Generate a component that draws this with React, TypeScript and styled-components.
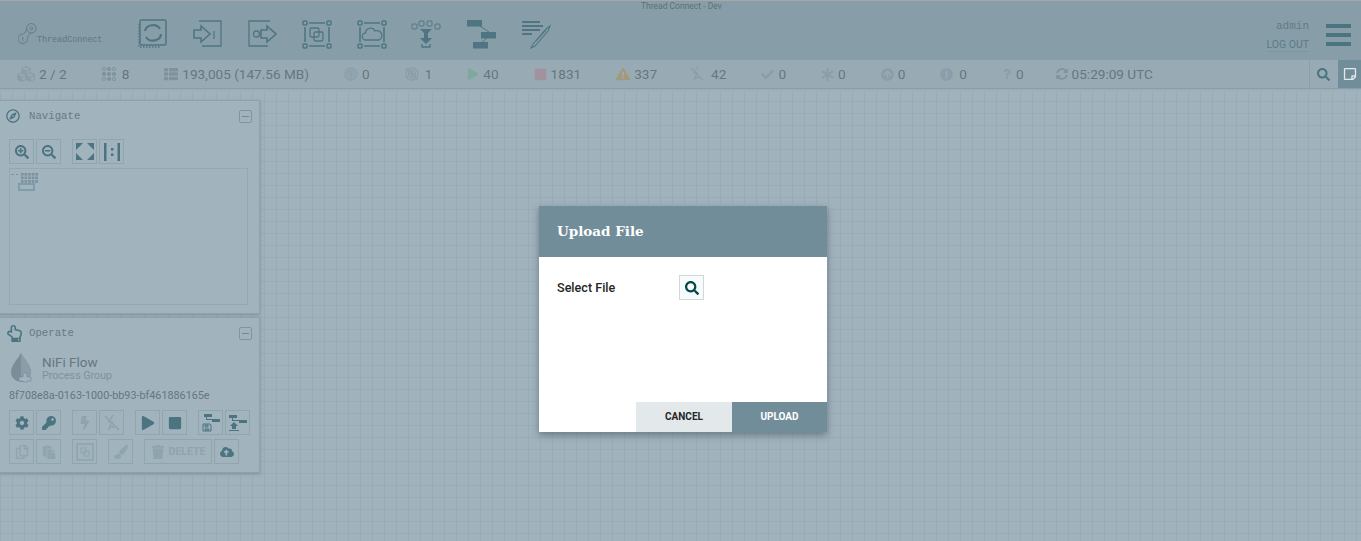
import React from "react";
import styled, { createGlobalStyle } from "styled-components";
import {
  FaArrowCircleUp, FaAsterisk, FaBolt, FaCheck, FaCloudUploadAlt, FaCog, FaCubes,
  FaExclamationCircle, FaExclamationTriangle, FaKey, FaPaintBrush, FaPaste, FaPlay, FaQuestion,
  FaRegCompass, FaRegCopy, FaRegHandPointUp, FaRegStickyNote, FaSearch, FaSearchMinus, FaSearchPlus,
  FaStop, FaSyncAlt, FaThList, FaTrash,
} from "react-icons/fa";

const Global = createGlobalStyle`
  html, body { margin: 0; padding: 0; height: 100%; overflow: hidden; }
  body { font-family: Roboto, "Liberation Sans", sans-serif; background: #a0b2bc; }
  #root { height: 100%; }
`;

const Page = styled.div`
  position: relative;
  display: flex;
  flex-direction: column;
  width: 1361px;
  height: 541px;
  overflow: hidden;
`;

const Header = styled.header`
  position: relative;
  display: flex;
  align-items: center;
  height: 59px;
  flex-shrink: 0;
  background: #879ea9;
  border-top: 1px solid #a9a5a8;
  padding: 0 10px 0 18px;
`;

const AppTitle = styled.div`
  position: absolute;
  top: 0;
  left: 641px;
  font-size: 8.5px;
  line-height: 10px;
  color: #5f6f78;
`;

const Logo = styled.div`
  display: flex;
  align-items: flex-end;
  width: 120px;
  height: 24px;
  margin-top: 6px;
  flex-shrink: 0;
`;

const LogoText = styled.span`
  font-family: "Liberation Mono", monospace;
  font-size: 8.4px;
  line-height: 9px;
  color: #607680;
  margin-bottom: 1px;
`;

const Tools = styled.div`
  display: flex;
  gap: 24.7px;
  margin-top: 6px;
`;

const ToolIcon = styled.svg`
  display: block;
  width: 30px;
  height: 30px;
  fill: none;
  stroke: #4f7582;
  stroke-width: 1.3;
`;

const User = styled.div`
  margin-left: auto;
  display: flex;
  flex-direction: column;
  align-items: flex-end;
  margin-top: 10px;
`;

const UserName = styled.div`
  font-family: "Liberation Mono", monospace;
  font-size: 11px;
  line-height: 14px;
  color: #667a84;
`;

const LogOut = styled.div`
  margin-top: 5px;
  font-size: 10.5px;
  line-height: 13px;
  color: #5b7a86;
  border-bottom: 1px solid #7d96a1;
`;

const Burger = styled.div`
  display: flex;
  flex-direction: column;
  gap: 5px;
  margin-left: 17px;
  margin-top: 9px;
`;

const BurgerBar = styled.div`
  width: 25px;
  height: 4px;
  background: #4b7480;
`;

const StatusBar = styled.div`
  display: flex;
  align-items: center;
  height: 28px;
  flex-shrink: 0;
  background: #98abb4;
  border-bottom: 1px solid #8a9fa9;
  padding-left: 17px;
`;

const Stat = styled.div<{ $gap?: number; $end?: number }>`
  display: flex;
  align-items: center;
  gap: ${(p) => p.$gap ?? 4}px;
  margin-right: ${(p) => p.$end ?? 35}px;
  font-size: 13.6px;
  color: #67767f;
  white-space: nowrap;
`;

const StatIcon = styled.span<{ $color?: string; $size?: number }>`
  display: flex;
  color: ${(p) => p.$color ?? "#8a9eaa"};
  font-size: ${(p) => p.$size ?? 13}px;
`;

const StatusTools = styled.div`
  margin-left: auto;
  display: flex;
  height: 100%;
`;

const SearchTab = styled.div`
  display: flex;
  align-items: center;
  justify-content: center;
  width: 27px;
  border-left: 1px solid #8a9fa9;
  color: #4b7480;
  font-size: 13px;
  margin-right: 1px;
`;

const NoteTab = styled.div`
  display: flex;
  align-items: center;
  justify-content: center;
  width: 23px;
  background: #728d9a;
  color: #e3eaed;
  font-size: 14px;
`;

const Canvas = styled.main`
  flex: 1;
  display: flex;
  flex-direction: column;
  gap: 3px;
  padding-top: 11px;
  background-color: #a0b2bc;
  background-image:
    linear-gradient(to right, #99acb6 1px, transparent 1px),
    linear-gradient(to bottom, #99acb6 1px, transparent 1px);
  background-size: 12px 12px;
`;

const Panel = styled.section`
  width: 260px;
  box-sizing: border-box;
  background: #a1b3bd;
  border: 1px solid #8ea2ac;
  border-left: none;
  box-shadow: 0 1px 3px rgba(70, 90, 100, 0.35);
  padding: 0 0 4px 9px;
`;

const PanelHead = styled.div<{ $bottom?: number }>`
  box-sizing: border-box;
  display: flex;
  align-items: center;
  height: 28px;
  margin: 0 0 ${(p) => p.$bottom ?? 0}px -3px;
  padding: 2px 7px 0 0;
`;

const PanelIcon = styled.span<{ $size?: number }>`
  display: flex;
  align-items: center;
  color: #4b7480;
  font-size: ${(p) => p.$size ?? 14}px;
  width: 23px;
`;

const PanelTitle = styled.span`
  font-family: "Liberation Mono", monospace;
  font-size: 10.7px;
  color: #667a84;
`;

const Collapse = styled.div`
  margin-left: auto;
  width: 11px;
  height: 11px;
  border: 1px solid #7f96a1;
  border-radius: 2px;
  display: flex;
  align-items: center;
  justify-content: center;
  &::before {
    content: "";
    width: 7px;
    height: 1px;
    background: #6f8895;
  }
`;

const ButtonRow = styled.div`
  display: flex;
  gap: 2px;
  margin-bottom: 4px;
`;

const Spacer = styled.div`
  width: 7px;
`;

const IconButton = styled.div<{ $off?: boolean; $wide?: boolean }>`
  box-sizing: border-box;
  display: flex;
  align-items: center;
  justify-content: center;
  gap: 4px;
  width: ${(p) => (p.$wide ? "68px" : "25px")};
  height: 25px;
  border: 1px solid #91a5af;
  color: ${(p) => (p.$off ? "#8ea4ae" : "#4b7480")};
  font-size: 14px;
`;

const DeleteLabel = styled.span`
  font-size: 10.5px;
  font-weight: 700;
  color: #8ea4ae;
`;

const Minimap = styled.div`
  position: relative;
  width: 239px;
  height: 137px;
  box-sizing: border-box;
  border: 1px solid #94a8b2;
  margin-bottom: 4px;
`;

const MiniGrid = styled.div`
  position: absolute;
  top: 3px;
  left: 10px;
  width: 18px;
  height: 11px;
  background-color: #7c929e;
  background-image:
    linear-gradient(to right, #a1b3bd 1px, transparent 1px),
    linear-gradient(to bottom, #a1b3bd 1px, transparent 1px);
  background-size: 3.6px 3.6px;
  &::before {
    content: "";
    position: absolute;
    left: -9px;
    top: 2px;
    width: 7px;
    height: 1px;
    background: repeating-linear-gradient(to right, #7c929e 0 3px, transparent 3px 5px);
  }
`;

const MiniView = styled.div`
  position: absolute;
  top: 14px;
  left: 8px;
  width: 13px;
  height: 4px;
  border: 2px solid #7e9dab;
`;

const GroupInfo = styled.div`
  display: flex;
  align-items: center;
  margin: 7px 0 6px 1px;
`;

const DropSlot = styled.div`
  display: flex;
  width: 32px;
`;

const GroupName = styled.div`
  font-size: 13.5px;
  line-height: 16px;
  color: #67767f;
`;

const GroupType = styled.div`
  font-size: 10.7px;
  line-height: 12px;
  color: #7f929c;
`;

const GroupId = styled.div`
  font-size: 10.8px;
  line-height: 14px;
  color: #67767f;
  margin-bottom: 7px;
`;

const Modal = styled.div`
  position: absolute;
  top: 206px;
  left: 539px;
  width: 288px;
  height: 226px;
  display: flex;
  flex-direction: column;
  background: #fff;
  box-shadow: 0 3px 7px rgba(40, 55, 65, 0.45);
`;

const ModalHead = styled.div`
  box-sizing: border-box;
  display: flex;
  align-items: center;
  height: 51px;
  padding: 0 0 2px 18px;
  background: #728d9a;
  color: #fff;
  font-family: "DejaVu Serif", serif;
  font-weight: 700;
  font-size: 13.5px;
`;

const ModalBody = styled.div`
  flex: 1;
  display: flex;
  align-items: flex-start;
  padding: 18px 0 0 18px;
`;

const FieldLabel = styled.label`
  width: 122px;
  line-height: 26px;
  font-size: 12.6px;
  font-weight: 500;
  color: #262626;
`;

const BrowseButton = styled.div`
  box-sizing: border-box;
  display: flex;
  align-items: center;
  justify-content: center;
  width: 25px;
  height: 25px;
  background: #f8fbfb;
  border: 1px solid #ccdadb;
  color: #004849;
  font-size: 14px;
`;

const ModalFoot = styled.div`
  display: flex;
  justify-content: flex-end;
`;

const FootButton = styled.div<{ $primary?: boolean }>`
  box-sizing: border-box;
  display: flex;
  align-items: center;
  justify-content: center;
  width: ${(p) => (p.$primary ? "95px" : "96px")};
  height: 30px;
  padding-bottom: 1px;
  font-size: 10px;
  font-weight: 700;
  background: ${(p) => (p.$primary ? "#728d9a" : "#e3e8eb")};
  color: ${(p) => (p.$primary ? "#fff" : "#262626")};
`;

const solid = { fill: "#4f7582", stroke: "none" };

const tools = [
  // processor
  <><rect x="2" y="1" width="26" height="25" rx="1.5" strokeWidth="1.5" /><path d="M1 5v23h22" strokeDasharray="1.5 1.5" /><path d="M7 12a8 7 0 0 1 15-2M23 15a8 7 0 0 1-15 3" strokeWidth="2.2" /></>,
  // input port
  <><path d="M6 2h22v25H9" /><path d="M1 11h7V7l9 8-9 8v-4H1z" strokeWidth="1.6" /><path d="M21 12v8" /></>,
  // output port
  <><path d="M23 2H2v25h19" /><circle cx="9.5" cy="15" r="3" /><path d="M14 11h6V7l9 8-9 8v-4h-6z" strokeWidth="1.6" /></>,
  // process group
  <><rect x="1" y="2" width="4" height="4" rx="1" strokeWidth="1.5" /><rect x="25" y="2" width="4" height="4" rx="1" strokeWidth="1.5" /><rect x="1" y="25" width="4" height="4" rx="1" strokeWidth="1.5" /><rect x="25" y="25" width="4" height="4" rx="1" strokeWidth="1.5" /><path d="M7 4h16M7 27h16M3 8v15M27 8v15" strokeWidth="1.6" /><rect x="8" y="9" width="9" height="9" rx="1.5" /><rect x="12" y="13" width="9" height="9" rx="1.5" /></>,
  // remote process group
  <><rect x="1" y="2" width="4" height="4" rx="1" strokeWidth="1.5" /><rect x="25" y="2" width="4" height="4" rx="1" strokeWidth="1.5" /><rect x="1" y="25" width="4" height="4" rx="1" strokeWidth="1.5" /><rect x="25" y="25" width="4" height="4" rx="1" strokeWidth="1.5" /><path d="M7 4h16M7 27h16M3 8v15M27 8v15" strokeWidth="1.6" /><path d="M9 21a3.5 3.5 0 0 1-.5-7 5 5 0 0 1 9.5-2 4.5 4.5 0 0 1 4 9z" /></>,
  // funnel
  <><rect x="1" y="5" width="5" height="5" rx="1" strokeWidth="1" /><rect x="8" y="2" width="5" height="5" rx="1" strokeWidth="1" /><rect x="16" y="2" width="5" height="5" rx="1" strokeWidth="1" /><rect x="24" y="5" width="5" height="5" rx="1" strokeWidth="1" /><path {...solid} d="M9 10h12l-4 4v5h4l-6 6-6-6h4v-5z" /><path d="M11 25v3h8v-3" /></>,
  // template
  <><rect {...solid} x="1" y="1" width="15" height="6.5" /><rect {...solid} x="15" y="13" width="15" height="6.5" /><rect {...solid} x="7" y="23" width="15" height="6.5" /><path d="M14 7l9 6M21 19l-6 5" strokeWidth="1" /></>,
  // label
  <><path d="M1 3h18M1 7h21M1 11h18M1 15h10" strokeWidth="1.9" /><path d="M12 25l13-15 4-3-2 5-13 15-4 2zM15 22l10-11" strokeWidth="1.1" /></>,
];

const Bullseye = ({ off }: { off?: boolean }) => (
  <svg width="14" height="14" viewBox="0 0 14 14" fill="none" stroke="#8a9eaa" strokeWidth="1.3">
    <circle cx="7" cy="7" r="6" />
    <circle cx="7" cy="7" r="3.5" />
    <circle cx="7" cy="7" r="1.2" fill="#8a9eaa" />
    {off && <path d="M1 1l12 12" strokeWidth="1.5" />}
  </svg>
);

const Threads = () => (
  <svg width="14" height="14" viewBox="0 0 14 14" fill="none" stroke="#7f939f">
    {[2, 7, 12].map((y) => [2, 7, 12].map((x) => <circle key={`${x}-${y}`} cx={x} cy={y} r="1.6" fill={y === 7 || x === 7 ? "#7f939f" : "none"} />))}
  </svg>
);

const BoltOff = ({ size = 14, color = "#8a9eaa" }: { size?: number; color?: string }) => (
  <svg width={size} height={size} viewBox="0 0 14 14" fill="none" stroke={color} strokeWidth="1.3">
    <path d="M8 0L4 6h3L5 10l4 1M1 1l12 12" />
    <path d="M4 13l2-3" />
  </svg>
);

const Revert = () => (
  <svg width="18" height="18" viewBox="0 0 18 18" fill="#4b7480">
    <path d="M0 1h8v3H0zM10 6h8v3h-8zM4 4v2h6v1H3V4z" />
    <path d="M5 8l4 4H7v3H3v-3H1zM0 16h10v1H0z" />
  </svg>
);

const SaveTemplate = () => (
  <svg width="18" height="18" viewBox="0 0 18 18" fill="#4b7480">
    <path d="M2 0h8v3H2zM10 5h8v3h-8zM5 3v2h5v1H4V3z" />
    <path d="M1 10h7l1 1v6H1zM3 15h4v1H3zM3 11h3v2H3z" fill="none" stroke="#4b7480" />
  </svg>
);

const GroupBox = () => (
  <svg width="18" height="18" viewBox="0 0 18 18" fill="none" stroke="#8ea4ae">
    <rect x="1" y="1" width="16" height="16" strokeWidth="1.5" />
    <rect x="5" y="5" width="5" height="5" />
    <rect x="8" y="8" width="5" height="5" />
  </svg>
);

const Fit = () => (
  <svg width="18" height="17" viewBox="0 0 18 17" fill="#4b7480">
    <path d="M0 0h7L0 7zM18 0h-7l7 7zM0 17h7l-7-7zM18 17h-7l7-7z" />
  </svg>
);

const Actual = () => (
  <svg width="18" height="18" viewBox="0 0 18 18" fill="#4b7480">
    <path d="M1 0h2.5v18H1zM14.5 0H17v18h-2.5zM8 5h2.5v2.5H8zM8 10.5h2.5V13H8z" />
  </svg>
);

const Drop = () => (
  <svg width="22" height="30" viewBox="0 0 22 30">
    <path d="M11 0c3 6 10 12 10 19a10 10 0 0 1-20 0C1 12 8 6 11 0z" fill="#7a8d98" />
    <path d="M11 0c3 6 10 12 10 19a10 10 0 0 1-10 10z" fill="#8a9da8" />
    <path d="M13 20h4v4h4v4h-4v1h-4v-1H9v-4h4z" fill="#a1b3bd" stroke="#7b8e99" strokeWidth="0.7" />
  </svg>
);

const LogoMark = () => (
  <svg width="19" height="24" viewBox="0 0 20 24" fill="none" stroke="#607680" strokeWidth="0.9">
    <circle cx="14" cy="6" r="5" />
    <circle cx="14" cy="6" r="1.5" />
    <path d="M9 6c-1 5-3 6-4 6a5 5 0 1 0 5 5c0-3 2-5 4-6" />
    <path d="M5 15v4" />
  </svg>
);

export default function App() {
  return (
    <Page>
      <Global />
      <Header>
        <AppTitle>Thread Connect - Dev</AppTitle>
        <Logo>
          <LogoMark />
          <LogoText>ThreadConnect</LogoText>
        </Logo>
        <Tools>
          {tools.map((t, i) => (
            <ToolIcon key={i} viewBox="0 0 30 30">{t}</ToolIcon>
          ))}
        </Tools>
        <User>
          <UserName>admin</UserName>
          <LogOut>LOG OUT</LogOut>
        </User>
        <Burger>
          <BurgerBar />
          <BurgerBar />
          <BurgerBar />
        </Burger>
      </Header>

      <StatusBar>
        <Stat><StatIcon $size={18}><FaCubes /></StatIcon>2 / 2</Stat>
        <Stat $gap={6}><StatIcon><Threads /></StatIcon>8</Stat>
        <Stat><StatIcon $size={14} $color="#7f939f"><FaThList /></StatIcon>193,005 (147.56 MB)</Stat>
        <Stat><StatIcon><Bullseye /></StatIcon>0</Stat>
        <Stat $gap={6}><StatIcon><Bullseye off /></StatIcon>1</Stat>
        <Stat><StatIcon $size={12} $color="#7fa89f"><FaPlay /></StatIcon>40</Stat>
        <Stat><StatIcon $size={13} $color="#a2919f"><FaStop /></StatIcon>1831</Stat>
        <Stat $end={33}><StatIcon $size={14} $color="#a39a7a"><FaExclamationTriangle /></StatIcon>337</Stat>
        <Stat $gap={7}><StatIcon><BoltOff /></StatIcon>42</Stat>
        <Stat><StatIcon><FaCheck /></StatIcon>0</Stat>
        <Stat><StatIcon><FaAsterisk /></StatIcon>0</Stat>
        <Stat><StatIcon><FaArrowCircleUp /></StatIcon>0</Stat>
        <Stat $gap={6}><StatIcon><FaExclamationCircle /></StatIcon>0</Stat>
        <Stat $end={32}><StatIcon $size={10}><FaQuestion /></StatIcon>0</Stat>
        <Stat><StatIcon $size={12} $color="#7f939f"><FaSyncAlt /></StatIcon>05:29:09 UTC</Stat>
        <StatusTools>
          <SearchTab><FaSearch /></SearchTab>
          <NoteTab><FaRegStickyNote /></NoteTab>
        </StatusTools>
      </StatusBar>

      <Canvas>
        <Panel>
          <PanelHead $bottom={10}>
            <PanelIcon><FaRegCompass /></PanelIcon>
            <PanelTitle>Navigate</PanelTitle>
            <Collapse />
          </PanelHead>
          <ButtonRow>
            <IconButton><FaSearchPlus /></IconButton>
            <IconButton><FaSearchMinus /></IconButton>
            <Spacer />
            <IconButton><Fit /></IconButton>
            <IconButton><Actual /></IconButton>
          </ButtonRow>
          <Minimap>
            <MiniGrid />
            <MiniView />
          </Minimap>
        </Panel>

        <Panel>
          <PanelHead>
            <PanelIcon $size={17}><FaRegHandPointUp /></PanelIcon>
            <PanelTitle>Operate</PanelTitle>
            <Collapse />
          </PanelHead>
          <GroupInfo>
            <DropSlot><Drop /></DropSlot>
            <div>
              <GroupName>NiFi Flow</GroupName>
              <GroupType>Process Group</GroupType>
            </div>
          </GroupInfo>
          <GroupId>8f708e8a-0163-1000-bb93-bf461886165e</GroupId>
          <ButtonRow>
            <IconButton><FaCog /></IconButton>
            <IconButton><FaKey /></IconButton>
            <Spacer />
            <IconButton $off><FaBolt /></IconButton>
            <IconButton $off><BoltOff size={16} color="#8ea4ae" /></IconButton>
            <Spacer />
            <IconButton><FaPlay /></IconButton>
            <IconButton><FaStop /></IconButton>
            <Spacer />
            <IconButton><SaveTemplate /></IconButton>
            <IconButton><Revert /></IconButton>
          </ButtonRow>
          <ButtonRow>
            <IconButton $off><FaRegCopy /></IconButton>
            <IconButton $off><FaPaste /></IconButton>
            <Spacer />
            <IconButton $off><GroupBox /></IconButton>
            <Spacer />
            <IconButton $off><FaPaintBrush /></IconButton>
            <Spacer />
            <IconButton $off $wide><FaTrash /><DeleteLabel>DELETE</DeleteLabel></IconButton>
            <IconButton><FaCloudUploadAlt /></IconButton>
          </ButtonRow>
        </Panel>
      </Canvas>

      <Modal>
        <ModalHead>Upload File</ModalHead>
        <ModalBody>
          <FieldLabel>Select File</FieldLabel>
          <BrowseButton><FaSearch /></BrowseButton>
        </ModalBody>
        <ModalFoot>
          <FootButton>CANCEL</FootButton>
          <FootButton $primary>UPLOAD</FootButton>
        </ModalFoot>
      </Modal>
    </Page>
  );
}
